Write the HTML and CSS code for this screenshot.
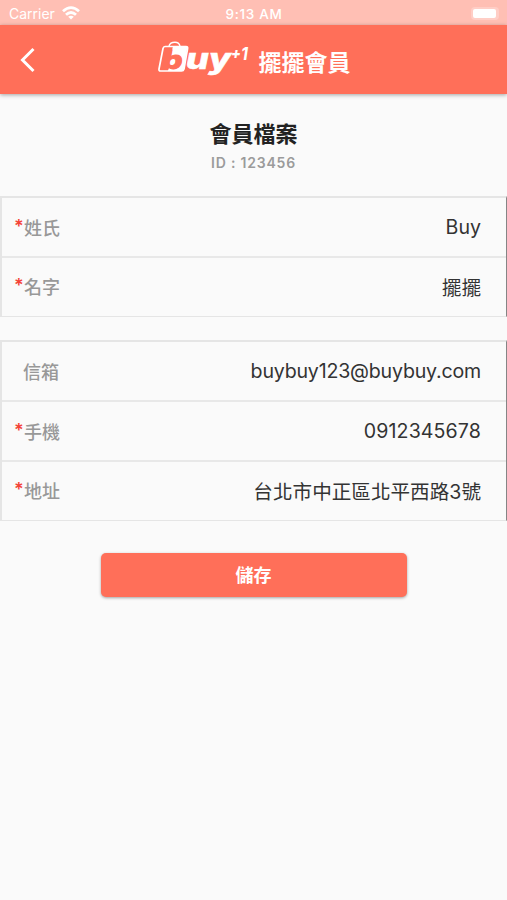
FILE: index.html
```html
<!DOCTYPE html>
<html lang="zh-Hant">
<head>
  <meta charset="UTF-8" />
  <meta name="viewport" content="width=device-width, initial-scale=1.0"/>
  <title>擺擺會員</title>
  <link rel="stylesheet" href="styles.css">
</head>
<body>
  <div class="status-bar">
    <div class="carrier">
      <span>Carrier</span>
      <svg class="wifi" width="18" height="14" viewBox="0 0 18 14" fill="none" stroke="#fff" stroke-width="2.8">
        <path d="M1 5.2Q9 -2 17 5.2M4 8.8Q9 4.2 14 8.8"/>
        <path d="M9 13.5L6.2 10.8Q9 8.6 11.8 10.8Z" fill="#fff" stroke="none"/>
      </svg>
    </div>
    <span class="time">9:13 AM</span>
    <div class="battery"><span></span></div>
  </div>

  <header class="app-bar">
    <button class="back" aria-label="Back">
      <svg width="16" height="26" viewBox="0 0 16 26" fill="none" stroke="#fff" stroke-width="3">
        <path d="M14.5 2L3.5 13L14.5 24"/>
      </svg>
    </button>
    <div class="brand">
      <svg class="logo" width="94" height="38" viewBox="0 0 94 38">
        <path d="M12 5Q13 1.2 18 1.2Q22 1.2 23 5" fill="none" stroke="#fff" stroke-width="1.4"/>
        <path d="M8 5.5H29Q31 5.5 30.6 7.5L27 28Q26.5 30 24.5 30H3.5Q1.6 30 2 28L6 7.5Q6.5 5.5 8 5.5Z" fill="none" stroke="#fff" stroke-width="1.7"/>
        <path d="M16 5.5H30.5L26.5 30H11L12 20Z" fill="#fff"/>
        <text class="logo-b" x="5.5" y="27.5" textLength="20" lengthAdjust="spacingAndGlyphs">b</text>
        <text class="logo-uy" x="29" y="28" textLength="45" lengthAdjust="spacingAndGlyphs">uy</text>
        <text class="logo-plus" x="74" y="18" textLength="10" lengthAdjust="spacingAndGlyphs">+</text>
        <text class="logo-one" x="84" y="19" textLength="7" lengthAdjust="spacingAndGlyphs">1</text>
      </svg>
      <h1>擺擺會員</h1>
    </div>
  </header>

  <main>
    <div class="profile">
      <h2>會員檔案</h2>
      <p>ID : 123456</p>
    </div>

    <div class="group">
      <div class="row"><label><i>*</i>姓氏</label><span class="value">Buy</span></div>
      <div class="row"><label><i>*</i>名字</label><span class="value">擺擺</span></div>
    </div>

    <div class="group">
      <div class="row"><label class="optional">信箱</label><span class="value email">buybuy123@buybuy.com</span></div>
      <div class="row"><label><i>*</i>手機</label><span class="value phone">0912345678</span></div>
      <div class="row"><label><i>*</i>地址</label><span class="value">台北市中正區北平西路3號</span></div>
    </div>

    <button class="save">儲存</button>
  </main>
</body>
</html>
```
FILE: styles.css
```css
* {
  box-sizing: border-box;
}

body {
  margin: 0;
  min-height: 900px;
  background: #fafafa;
  color: #333;
  font-family: Inter, "Noto Sans CJK TC", sans-serif;
}

h1, h2, p {
  margin: 0;
}

button {
  border: none;
  padding: 0;
  font-family: inherit;
}

.status-bar {
  display: grid;
  grid-template-columns: 1fr auto 1fr;
  align-items: center;
  height: 25px;
  padding: 2px 8px 0 9px;
  background: #ffbfb4;
  color: #fff;
  font-size: 13px;
}

.carrier {
  display: flex;
  align-items: center;
  gap: 7px;
  font-size: 14px;
}

.wifi {
  margin-top: -2px;
}

.time {
  font-size: 13.5px;
  font-weight: 500;
  letter-spacing: 0.7px;
}

.battery {
  justify-self: end;
  width: 28px;
  height: 13px;
  padding: 2px;
  border-radius: 4px;
  background: #ffcec6;
}

.battery span {
  display: block;
  width: 23px;
  height: 9px;
  border-radius: 2px;
  background: #fff;
}

.app-bar {
  display: grid;
  grid-template-columns: 50px 1fr 50px;
  align-items: center;
  height: 69px;
  background: #ff6f59;
  box-shadow: 0 1px 4px rgba(0, 0, 0, 0.35);
}

.back {
  height: 26px;
  padding-left: 19px;
  background: none;
  text-align: left;
}

.back svg {
  display: block;
}

.brand {
  display: flex;
  justify-content: center;
  align-items: center;
  gap: 8px;
}

.brand h1 {
  padding-top: 6px;
  color: #fff;
  font-size: 23px;
  line-height: 32px;
  font-weight: 700;
}

.logo {
  overflow: visible;
}

.logo text {
  font-style: italic;
  font-weight: 800;
  fill: #fff;
}

.logo .logo-b {
  font-size: 26px;
  fill: #ff6f59;
  stroke: #ff6f59;
  stroke-width: 1px;
}

.logo .logo-uy {
  font-size: 28px;
  stroke: #fff;
  stroke-width: 0.5px;
}

.logo .logo-plus {
  font-size: 15px;
}

.logo .logo-one {
  font-size: 18px;
  font-weight: 700;
}

.profile {
  height: 102px;
  padding-top: 24px;
  text-align: center;
}

.profile h2 {
  color: #222;
  font-size: 22px;
  line-height: 32px;
}

.profile p {
  color: #9b9b9b;
  font-size: 14px;
  line-height: 26px;
  font-weight: 600;
  letter-spacing: 0.8px;
}

.group {
  margin-bottom: 23px;
  border: 2px solid #e5e5e5;
  border-width: 2px 1px 1px 2px;
  border-right-color: #858585;
}

.row {
  display: flex;
  justify-content: space-between;
  align-items: center;
  height: 60px;
  padding: 0 25px 0 13px;
  border-bottom: 2px solid #e8e8e8;
}

.row:last-child {
  height: 58px;
  padding-bottom: 2px;
  border-bottom: none;
}

.row label {
  display: flex;
  color: #989898;
  font-size: 18px;
  font-weight: 500;
}

.row label i {
  width: 9px;
  margin-left: -1px;
  padding-top: 2px;
  margin-right: 1px;
  color: #f44336;
  font-style: normal;
  font-weight: 600;
}

.row .optional {
  padding-left: 8px;
}

.value {
  font-size: 19.6px;
}

.email {
  letter-spacing: -0.2px;
}

.phone {
  letter-spacing: 0.1px;
}

.save {
  display: block;
  width: 306px;
  height: 44px;
  margin: 32px auto 0;
  padding-bottom: 2px;
  border-radius: 5px;
  background: #ff6f59;
  box-shadow: 0 1px 3px rgba(0, 0, 0, 0.35);
  color: #fff;
  font-size: 18px;
  font-weight: 600;
}
```
